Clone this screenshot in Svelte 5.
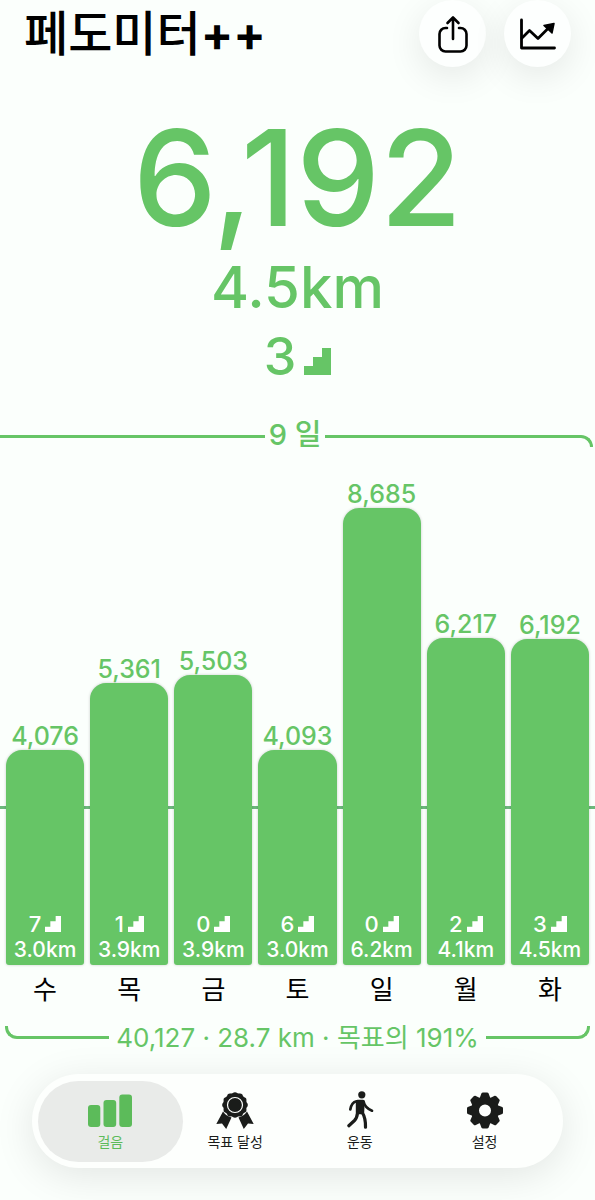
<script lang="ts">
  type Day = {
    name: string;
    steps: number;
    floors: number;
    km: string;
  };

  const CHART_MAX = 9270;
  const GOAL = 2970;

  const days: Day[] = [
    { name: "수", steps: 4076, floors: 7, km: "3.0" },
    { name: "목", steps: 5361, floors: 1, km: "3.9" },
    { name: "금", steps: 5503, floors: 0, km: "3.9" },
    { name: "토", steps: 4093, floors: 6, km: "3.0" },
    { name: "일", steps: 8685, floors: 0, km: "6.2" },
    { name: "월", steps: 6217, floors: 2, km: "4.1" },
    { name: "화", steps: 6192, floors: 3, km: "4.5" },
  ];
  const today = days[days.length - 1];

  const tabs = [
    { id: "steps", label: "걸음" },
    { id: "awards", label: "목표 달성" },
    { id: "workouts", label: "운동" },
    { id: "settings", label: "설정" },
  ];
  let activeTab = $state("steps");

  // twelve little bumps around the award badge
  const bumps = Array.from({ length: 12 }, (_, i) => {
    const angle = (i * Math.PI) / 6;
    return { x: 19 + 10 * Math.sin(angle), y: 13 - 10 * Math.cos(angle) };
  });
  const teeth = [0, 45, 90, 135, 180, 225, 270, 315];

  function format(n: number): string {
    return n.toLocaleString("en-US");
  }
  function percent(n: number): number {
    return (n / CHART_MAX) * 100;
  }
</script>

{#snippet stairs()}
  <svg class="stairs" viewBox="0 0 27 27" aria-hidden="true">
    <path d="M0 27V18H9V9H18V0H27V27Z" fill="currentColor" />
  </svg>
{/snippet}

<div class="page">
  <header>
    <h1>페도미터<span>++</span></h1>
    <div class="actions">
      <button class="round" aria-label="공유">
        <svg width="34" height="40" viewBox="0 0 34 40" fill="none" stroke="#000" stroke-width="2.6" stroke-linecap="round" stroke-linejoin="round">
          <path d="M11 14H9.5a6 6 0 0 0-6 6V31.500a6 6 0 0 0 6 6H24.500a6 6 0 0 0 6-6V20a6 6 0 0 0-6-6H23" />
          <path d="M17 25V3.500M11.500 9L17 3.500L22.500 9" />
        </svg>
      </button>
      <button class="round" aria-label="추세">
        <svg width="38" height="34" viewBox="0 0 38 34" fill="none" stroke="#000" stroke-width="2.800" stroke-linecap="round" stroke-linejoin="round">
          <path d="M2.500 3V31H35.500" />
          <path d="M3 21L10.500 13.500L19 21.500L30 10.500" />
          <path d="M35 6.500L25 8.500L33 16Z" fill="#000" stroke-width="1.500" />
        </svg>
      </button>
    </div>
  </header>

  <section class="today">
    <div class="steps">{format(today.steps)}</div>
    <div class="distance">{today.km}km</div>
    <div class="floors">{today.floors}{@render stairs()}</div>
  </section>

  <div class="range">
    <span class="line"></span>
    <span class="range-text">9 일</span>
    <span class="line end"></span>
  </div>

  <section class="chart">
    <div class="goal" style="bottom: {percent(GOAL)}%"></div>
    {#each days as day}
      <div class="column">
        <div class="value">{format(day.steps)}</div>
        <div class="bar" style="height: {percent(day.steps)}%">
          <div class="bar-floors">{day.floors}{@render stairs()}</div>
          <div class="bar-km">{day.km}km</div>
        </div>
      </div>
    {/each}
  </section>
  <div class="names">
    {#each days as day}
      <div>{day.name}</div>
    {/each}
  </div>

  <div class="summary">
    <span class="bracket left"></span>
    <span>40,127 · 28.7 km · 목표의 191%</span>
    <span class="bracket right"></span>
  </div>

  <nav>
    {#each tabs as tab}
      <button
        class="tab"
        class:active={activeTab === tab.id}
        onclick={() => (activeTab = tab.id)}
      >
        {#if tab.id === "steps"}
          <svg width="44" height="40" viewBox="0 0 44 40" fill="currentColor">
            <rect x="0" y="15" width="12.300" height="22" rx="3" />
            <rect x="15.500" y="10" width="12.700" height="27" rx="3" />
            <rect x="31.300" y="4.500" width="12.700" height="32.500" rx="3" />
          </svg>
        {:else if tab.id === "awards"}
          <svg width="38" height="40" viewBox="0 0 38 40" fill="currentColor">
            <g transform="translate(0 2)">
              <path d="M7 19.500L0.300 32L6 31.500L10.200 37L15.500 25.500Q10 24 7 19.500Z" />
              <path d="M31 19.500L37.700 32L32 31.500L27.800 37L22.500 25.500Q28 24 31 19.500Z" />
              <circle cx="19" cy="13" r="11.900" />
              {#each bumps as bump}
                <circle cx={bump.x} cy={bump.y} r="2.800" />
              {/each}
              <circle cx="19" cy="13" r="7.500" fill="none" stroke="#fdfffd" stroke-width="1.200" />
            </g>
          </svg>
        {:else if tab.id === "workouts"}
          <svg width="30" height="40" viewBox="0 0 30 40" fill="none" stroke="currentColor" stroke-linecap="round" stroke-linejoin="round">
            <circle cx="16.800" cy="4.800" r="3.600" fill="currentColor" stroke="none" />
            <path d="M12.500 11.500L18 11.500L17.500 22.500L12.500 22.500Z" fill="currentColor" stroke-width="3.400" />
            <path d="M11.500 11.300Q6.500 12.500 5.300 19.500M18.500 11.500Q20 18 27 20.700" stroke-width="2.700" />
            <path d="M12.500 23Q12 28 9.500 30.500L3.800 35.700M17.300 22.500Q20.700 28 20.500 37.200" stroke-width="3.200" />
          </svg>
        {:else}
          <svg width="38" height="40" viewBox="0 0 38 40">
            <g transform="translate(19 20.500)">
              <circle r="9.900" fill="none" stroke="currentColor" stroke-width="7.800" />
              {#each teeth as angle}
                <path d="M-5.500 -12L-3.500 -17.200Q-3.200 -18 -2 -18H2Q3.200 -18 3.500 -17.200L5.500 -12Z" fill="currentColor" transform="rotate({angle})" />
              {/each}
            </g>
          </svg>
        {/if}
        <span>{tab.label}</span>
      </button>
    {/each}
  </nav>
</div>

<style>
  :global(body) {
    margin: 0;
    background: #fbfffc;
  }
  .page {
    --green: #66c566;
    min-height: 100vh;
    box-sizing: border-box;
    overflow: hidden;
    background: #fbfffc;
    color: var(--green);
    font-family: Inter, "Noto Sans CJK KR", sans-serif;
    font-weight: 500;
    padding-bottom: 32px;
  }
  button {
    border: 0;
    padding: 0;
    font: inherit;
    cursor: pointer;
  }

  header {
    display: flex;
    justify-content: space-between;
    align-items: center;
    height: 67px;
    padding: 0 24px;
  }
  h1 {
    margin: 0;
    color: #000;
    font-size: 48px;
    font-weight: 500;
    line-height: 67px;
  }
  h1 span {
    font-weight: 700;
  }
  .actions {
    display: flex;
    gap: 18px;
  }
  .round {
    display: grid;
    place-items: center;
    width: 67px;
    height: 67px;
    border-radius: 50%;
    background: #fdfffe;
    box-shadow: 0 10px 36px rgba(0, 0, 0, 0.09);
  }

  .today {
    display: flex;
    flex-direction: column;
    align-items: center;
    padding-top: 42px;
  }
  .steps {
    font-size: 133px;
    line-height: 138px;
  }
  .distance {
    font-size: 58px;
    line-height: 80px;
  }
  .floors {
    display: flex;
    align-items: baseline;
    gap: 8px;
    font-size: 52px;
    line-height: 60px;
  }
  .floors .stairs {
    width: 27px;
    height: 27px;
  }

  .range {
    display: flex;
    align-items: center;
    gap: 4px;
    height: 36px;
    margin-top: 30px;
    padding-right: 2px;
    font-size: 29px;
    line-height: 36px;
  }
  .line {
    flex: 1;
    height: 12px;
    margin-top: 12px;
    box-sizing: border-box;
    border-top: 3px solid var(--green);
  }
  .line.end {
    border-right: 3px solid var(--green);
    border-top-right-radius: 12px;
  }

  .chart {
    position: relative;
    display: grid;
    grid-template-columns: repeat(7, 1fr);
    gap: 6px;
    height: 488px;
    margin-top: 24px;
    padding: 0 6px;
  }
  .goal {
    position: absolute;
    left: 0;
    right: 0;
    height: 3px;
    background: #6cb87c;
  }
  .column {
    position: relative;
    display: flex;
    flex-direction: column;
    justify-content: flex-end;
    min-width: 0;
    text-align: center;
  }
  .value {
    font-size: 25px;
    line-height: 28px;
  }
  .bar {
    display: flex;
    flex-direction: column;
    justify-content: flex-end;
    flex-shrink: 0;
    box-sizing: border-box;
    padding-bottom: 2px;
    border-radius: 16px 16px 3px 3px;
    background: var(--green);
    box-shadow: 0 0 3px rgba(0, 0, 0, 0.2);
    color: #fff;
  }
  .bar-floors {
    display: flex;
    justify-content: center;
    align-items: baseline;
    gap: 4px;
    font-size: 22px;
    line-height: 26px;
  }
  .bar-floors .stairs {
    width: 16px;
    height: 16px;
  }
  .bar-km {
    font-size: 21px;
    line-height: 26px;
  }

  .names {
    display: grid;
    grid-template-columns: repeat(7, 1fr);
    gap: 6px;
    padding: 7px 6px 0;
    color: #000;
    font-size: 26px;
    font-weight: 400;
    line-height: 36px;
    text-align: center;
  }

  .summary {
    display: flex;
    align-items: center;
    gap: 7px;
    margin-top: 12px;
    padding: 0 5px;
    font-size: 26px;
    font-weight: 400;
    line-height: 36px;
    white-space: nowrap;
  }
  .bracket {
    flex: 1;
    height: 13px;
    margin-bottom: 11px;
    box-sizing: border-box;
    border-bottom: 3px solid var(--green);
  }
  .bracket.left {
    border-left: 3px solid var(--green);
    border-bottom-left-radius: 12px;
  }
  .bracket.right {
    border-right: 3px solid var(--green);
    border-bottom-right-radius: 12px;
  }

  nav {
    display: grid;
    grid-template-columns: repeat(4, 1fr);
    margin: 18px 32px 0;
    padding: 7px 16px 6px;
    border-radius: 47px;
    background: #fdfffd;
    box-shadow: 0 8px 40px rgba(0, 0, 0, 0.1);
  }
  .tab {
    display: flex;
    flex-direction: column;
    align-items: center;
    height: 81px;
    margin: 0 -10px;
    padding-top: 9px;
    border-radius: 41px;
    background: none;
    color: #1a1c1a;
    font-size: 14px;
    font-weight: 400;
    line-height: 24px;
  }
  .tab.active {
    background: #e9ebe9;
    color: #5cbb5a;
  }
</style>
